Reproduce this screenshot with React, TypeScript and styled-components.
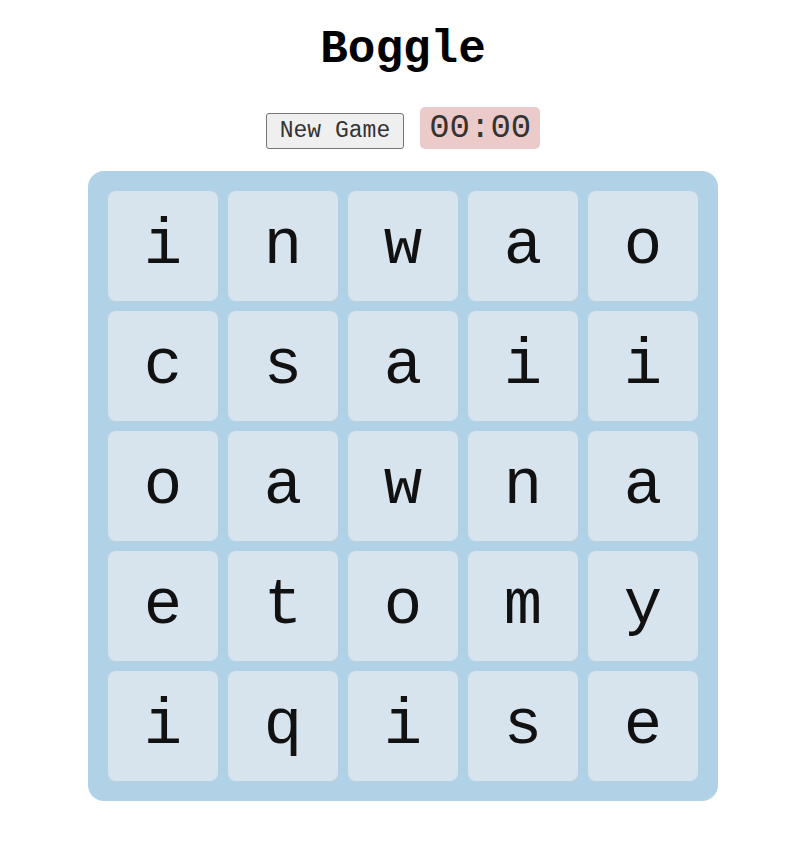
import React from "react";
import styled, { createGlobalStyle } from "styled-components";

const GlobalStyle = createGlobalStyle`
  html, body {
    margin: 0;
    padding: 0;
    background: #ffffff;
  }
  body {
    font-family: "Liberation Mono", "Courier New", monospace;
    color: #000;
  }
`;

const Page = styled.div`
  display: flex;
  flex-direction: column;
  align-items: center;
  padding: 23px 0 40px 17px;
`;

const Title = styled.h1`
  margin: 0;
  font-family: "Liberation Mono", "Courier New", monospace;
  font-size: 46px;
  font-weight: bold;
  line-height: 54px;
`;

const Controls = styled.div`
  display: flex;
  align-items: baseline;
  gap: 16px;
  margin-top: 30px;
`;

const Button = styled.button`
  font-family: "Liberation Mono", "Courier New", monospace;
  font-size: 23px;
  line-height: 27px;
  padding: 4px 13px 2px;
  height: 36px;
  background: #efefef;
  color: #333;
  border: 1px solid #767676;
  border-radius: 3px;
`;

const Timer = styled.div`
  font-family: "Liberation Mono", "Courier New", monospace;
  font-size: 34px;
  line-height: 42px;
  padding: 0 9px;
  background: #ebcaca;
  color: #333;
  border-radius: 5px;
`;

const Board = styled.div`
  margin-top: 22px;
  display: grid;
  grid-template-columns: repeat(5, 110px);
  grid-auto-rows: 110px;
  gap: 10px;
  padding: 20px;
  background: #b1d2e6;
  border-radius: 16px;
`;

const Tile = styled.div`
  display: flex;
  align-items: center;
  justify-content: center;
  background: #d8e4ed;
  border-radius: 8px;
  font-family: "Liberation Mono", "Courier New", monospace;
  font-size: 64px;
  color: #111;
`;

const letters = [
  "i", "n", "w", "a", "o",
  "c", "s", "a", "i", "i",
  "o", "a", "w", "n", "a",
  "e", "t", "o", "m", "y",
  "i", "q", "i", "s", "e",
];

export default function App() {
  return (
    <>
      <GlobalStyle />
      <Page>
        <Title>Boggle</Title>
        <Controls>
          <Button>New Game</Button>
          <Timer>00:00</Timer>
        </Controls>
        <Board>
          {letters.map((l, i) => (
            <Tile key={i}>{l}</Tile>
          ))}
        </Board>
      </Page>
    </>
  );
}
